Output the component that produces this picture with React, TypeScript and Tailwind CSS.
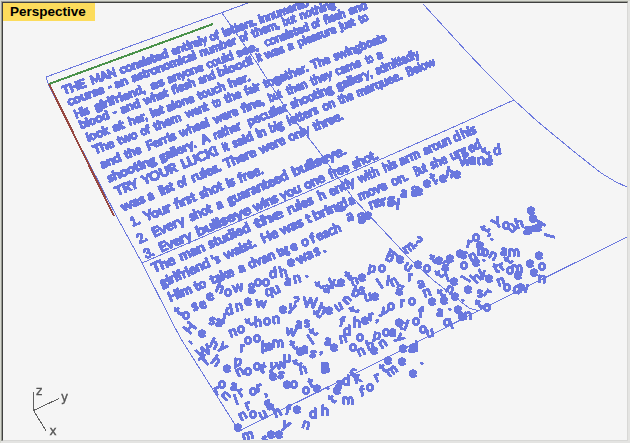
type Word = [string, number, number];
type Row = { from: [number, number]; to: [number, number]; size: number; words: Word[] };
type Glyph = [string, number, number, number];

const INK = "#6b78de";

// Each row runs along a baseline; its words are [text, left, right].
const rows: Row[] = [
  { from: [65, 94], to: [310, 5], size: 11.6, words: [["THE", 64, 88], ["MAN", 92, 118], ["consisted", 121, 170], ["entirely", 173, 209], ["of", 211, 221], ["letters.", 224, 258], ["Innumerab", 260, 310]] },
  { from: [70, 105], to: [337, 6], size: 11.6, words: [["course", 69, 106], ["-", 109, 113], ["an", 116, 130], ["astronomical", 133, 198], ["number", 201, 238], ["of", 241, 250], ["them,", 253, 281], ["but", 284, 298], ["nothing", 301, 337]] },
  { from: [76, 118], to: [367, 8], size: 11.6, words: [["His", 76, 91], ["girlfriend,", 96, 147], ["as", 152, 166], ["anyone", 169, 205], ["could", 208, 235], ["see,", 238, 260], ["consisted", 266, 311], ["of", 313, 322], ["flesh", 325, 347], ["and", 350, 369]] },
  { from: [80, 129], to: [368, 20], size: 11.6, words: [["blood", 81, 111], ["-", 114, 118], ["and", 122, 142], ["what", 145, 170], ["flesh", 173, 197], ["and", 200, 217], ["blood!", 219, 255], ["it", 258, 264], ["was", 266, 286], ["a", 289, 296], ["pleasure", 299, 338], ["just", 341, 357], ["to", 360, 370]] },
  { from: [86, 142], to: [250, 80], size: 11.8, words: [["look", 88, 111], ["at", 114, 126], ["her,", 130, 149], ["let", 152, 166], ["alone", 168, 196], ["touch", 199, 227], ["her.", 230, 252]] },
  { from: [97, 153], to: [387, 40], size: 12, words: [["The", 95, 116], ["two", 119, 139], ["of", 142, 152], ["them", 155, 183], ["went", 187, 210], ["to", 214, 223], ["the", 226, 243], ["fair", 246, 262], ["together.", 265, 310], ["The", 313, 332], ["swingboats", 335, 388]] },
  { from: [102, 168], to: [383, 57], size: 12, words: [["and", 102, 123], ["the", 126, 143], ["Ferris", 148, 178], ["wheel", 181, 211], ["were", 215, 240], ["fine,", 243, 266], ["but", 270, 284], ["then", 288, 309], ["they", 312, 334], ["came", 337, 363], ["to", 367, 375], ["a", 378, 385]] },
  { from: [109, 182], to: [417, 58], size: 12.3, words: [["shooting", 109, 158], ["gallery.", 161, 198], ["A", 203, 212], ["rather", 215, 243], ["peculiar", 249, 289], ["shooting", 292, 335], ["gallery,", 338, 374], ["admittedly", 377, 421]] },
  { from: [118, 195], to: [435, 65], size: 12.3, words: [["TRY", 117, 140], ["YOUR", 144, 179], ["LUCK!", 183, 220], ["It", 224, 231], ["said", 234, 255], ["in", 258, 268], ["big", 271, 285], ["letters", 289, 320], ["on", 324, 337], ["the", 340, 355], ["marquee.", 358, 404], ["Below", 408, 437]] },
  { from: [123, 211], to: [343, 119], size: 12.6, words: [["was", 123, 147], ["a", 149, 157], ["list", 161, 176], ["of", 179, 189], ["rules.", 193, 223], ["There", 226, 258], ["were", 261, 287], ["only", 290, 312], ["three.", 315, 345]] },
  { from: [133, 226], to: [263, 173], size: 13, words: [["1.", 132, 142], ["Your", 146, 173], ["first", 176, 198], ["shot", 201, 225], ["is", 228, 237], ["free.", 240, 265]] },
  { from: [140, 243], to: [347, 153], size: 13, words: [["2.", 139, 149], ["Every", 154, 187], ["shot", 191, 214], ["a", 218, 226], ["guaranteed", 229, 290], ["bullseye.", 294, 348]] },
  { from: [147, 258], to: [378, 158], size: 13, words: [["3.", 146, 156], ["Every", 161, 194], ["bullseye", 198, 253], ["wins", 255, 280], ["you", 282, 303], ["one", 306, 327], ["free", 331, 351], ["shot.", 354, 380]] },
  { from: [155, 272], to: [477, 132], size: 13, words: [["The", 154, 177], ["man", 181, 207], ["studied", 210, 252], ["the", 256, 285], ["rules", 289, 315], ["h", 320, 328], ["ently", 331, 357], ["with", 360, 381], ["his", 385, 399], ["arm", 401, 422], ["aroun", 425, 453], ["d", 455, 462], ["his", 463, 478]] },
  { from: [162, 287], to: [482, 147], size: 13, words: [["girlfriend", 162, 212], ["'s", 214, 222], ["waist.", 226, 258], ["He", 263, 280], ["was", 282, 305], ["t", 308, 312], ["bring!", 315, 350], ["a", 350, 357], ["move", 360, 389], ["on.", 393, 410], ["But", 416, 429], ["she", 432, 449], ["urg", 452, 469], ["ed", 470, 483]] },
  { from: [171, 301], to: [343, 230], size: 13, words: [["Him", 170, 194], ["to", 196, 208], ["take", 212, 236], ["a", 240, 248], ["dvan", 250, 277], ["tag", 279, 291], ["e", 292, 300], ["o", 303, 311], ["f", 312, 317], ["each", 318, 343]] },
];

// Letters that have come loose: [letter, centre x, centre y, rotation].
const loose: Glyph[] = [
  ["t", 178, 311, -40], ["o", 186, 315, 0], ["s", 195, 307, -20], ["e", 203, 305, -25], ["e", 210, 297, -20], ["h", 220, 288, 20], ["o", 228, 292, 0], ["w", 238, 288, -12], ["g", 252, 287, 5], ["o", 258, 282, 0], ["o", 266, 282, 0], ["d", 273, 273, -5], ["h", 283, 272, -12], ["e", 291, 262, 0], ["w", 302, 259, -30], ["a", 310, 255, -25], ["s", 317, 252, -20], [".", 325, 251, 0],
  ["a", 350, 217, -10], ["g", 361, 217, -15], ["e", 368, 215, 0], ["n", 373, 205, -20], ["e", 378, 203, -20], ["r", 384, 202, -15], ["g", 391, 200, 0], ["y", 397, 203, -20], ["a", 404, 193, 0], ["g", 415, 190, 5], ["e", 419, 191, 0], ["e", 427, 183, 0], ["t", 433, 178, -30], [".", 436, 183, 0], ["e", 443, 178, 0], ["h", 450, 173, 10], ["e", 457, 174, 0],
  ["w", 465, 162, -5], ["a", 473, 160, 0], ["n", 481, 161, -5], ["e", 489, 161, 0], ["t", 485, 151, -50], [",", 490, 153, 0], ["d", 497, 150, -10],
  ["H", 190, 328, -50], ["e", 202, 333, 0], ["s", 212, 321, 10], ["a", 219, 322, 0], ["i", 224, 319, 10], ["d", 229, 310, -15], ["n", 239, 307, -15], ["e", 248, 302, -10], ["w", 261, 304, 5], ["q", 269, 292, -15], ["u", 276, 290, -25], ["a", 288, 281, 0], ["n", 297, 279, -15], [".", 307, 276, 0],
  ["'", 194, 346, -45], ["W", 204, 352, -30], ["h", 214, 344, 25], ["y", 223, 347, 40], ["n", 233, 333, -20], ["o", 241, 329, 0], ["t", 249, 322, -50], ["h", 258, 322, -5], ["o", 267, 321, 0], ["n", 276, 320, -5], ["e", 283, 309, 0], ["y", 292, 308, 20], ["?", 296, 302, 10], ["W", 310, 303, 5], ["t", 319, 285, -50], ["a", 327, 289, 10], ["k", 333, 283, -20], ["e", 341, 282, 0], ["t", 348, 276, -30], ["h", 354, 280, -20], ["e", 362, 277, 0], ["p", 372, 269, 10], ["o", 382, 268, 0], ["b", 390, 257, 25], ["l", 394, 253, -50], ["e", 400, 259, 0], ["m", 409, 248, -35], ["?", 418, 242, 30],
  ["T", 205, 361, -40], ["h", 216, 361, 35], ["e", 227, 368, 0], ["r", 242, 348, 0], ["o", 248, 340, 0], ["o", 257, 338, 0], ["b", 265, 346, 0], ["l", 263, 348, 0], ["e", 269, 346, 0], ["m", 278, 343, 0], ["w", 291, 332, 10], ["a", 299, 324, 0], ["s", 307, 323, 0], ["t", 313, 332, -50], ["t", 317, 314, -40], ["h", 322, 309, 20], ["e", 329, 310, 0], ["u", 339, 307, -30], ["n", 347, 300, -50], ["t", 354, 310, -65], ["b", 356, 292, 20], ["s", 362, 290, 0], ["u", 368, 297, -10], ["e", 375, 296, 0], ["l", 380, 284, -35], ["i", 388, 281, 10], ["n", 394, 282, -30], ["g", 400, 289, 10], ["u", 408, 267, 35], ["r", 410, 277, 0], ["e", 418, 264, 0], ["o", 427, 268, 0],
  ["p", 238, 362, 5], ["n", 240, 372, -30], ["o", 248, 371, 0], ["o", 257, 366, 0], ["t", 263, 368, 15], ["y", 273, 367, 20], ["e", 273, 376, 0], ["w", 281, 365, -10], ["s", 281, 375, 20], ["u", 287, 358, 0], ["t", 297, 363, -60], ["n", 303, 370, -15], ["t", 293, 345, -30], ["e", 300, 351, 0], ["a", 305, 349, 0], ["s", 313, 354, 20], ["l", 311, 340, -35], [",", 321, 349, 0], ["a", 328, 341, 0], ["e", 334, 347, 0], ["n", 343, 339, -15], ["d", 347, 330, 0], ["f", 342, 322, 10], ["h", 357, 322, 0], ["e", 365, 320, 0], ["r", 371, 317, -5], [",", 377, 317, 0], ["y", 384, 312, 35], ["o", 391, 306, 0], ["r", 402, 303, 0], ["o", 412, 301, 0],
  ["B", 325, 368, -5], ["e", 325, 368, 0], ["o", 353, 347, 0], ["o", 360, 337, 0], ["n", 361, 352, -25], ["h", 370, 345, -20], ["e", 374, 350, 0], ["p", 377, 336, 10], ["o", 386, 332, 0], ["a", 393, 332, 0], ["y", 400, 338, 50], ["n", 383, 344, -35], ["e", 399, 322, 0], ["d", 404, 325, 20], ["o", 416, 321, 0], ["f", 421, 312, 0], ["o", 423, 329, 0], ["u", 430, 333, -10], ["e", 403, 348, 0], ["a", 412, 348, 0], ["d", 414, 346, 0],
  ["t", 433, 259, -30], ["e", 439, 260, 0], ["e", 450, 258, 0], ["g", 446, 265, 10], ["e", 460, 253, 0], ["s", 464, 255, 20], ["n", 473, 257, -30], ["e", 476, 262, 0], ["o", 464, 265, 0], ["r", 469, 244, 10], ["o", 476, 237, 0], ["e", 480, 245, 0], ["b", 481, 250, 0], ["o", 485, 252, 0], ["n", 493, 256, 30], [".", 484, 260, 0], ["t", 485, 229, -60], [",", 491, 232, 30], [".", 492, 239, 0], ["Y", 497, 223, -30], ["o", 506, 225, 0], ["u", 512, 228, -40], ["h", 519, 223, -20], ["a", 527, 230, 0], ["g", 533, 229, 70], ["e", 538, 227, 0], ["l", 541, 223, -60], ["e", 533, 218, 0], ["e", 531, 210, 0], ["l", 550, 236, -75],
  ["a", 504, 251, 0], ["m", 514, 252, 0], ["t", 508, 260, -50], ["e", 539, 255, 0], ["e", 530, 263, 0], ["o", 542, 266, 0], ["e", 534, 272, 0], ["n", 542, 279, 5], ["w", 523, 288, 0], ["d", 517, 289, 10], ["m", 517, 268, 0], ["o", 510, 270, 0], ["e", 518, 275, 0], ["t", 496, 268, -20], ["r", 502, 267, -35], ["n", 501, 282, -20], ["o", 507, 287, 0], ["e", 489, 278, 0], ["k", 483, 274, -20], ["h", 476, 278, -45], ["i", 466, 279, -60], ["e", 468, 289, 0], ["s", 480, 293, 0], ["r", 487, 293, 35], ["t", 439, 274, -50], ["i", 447, 277, -20], ["e", 454, 281, 0], ["a", 421, 284, -20], ["n", 427, 293, -20], ["e", 432, 301, 0], ["e", 444, 300, 0], ["t", 441, 293, -40], ["e", 455, 296, 0], ["n", 450, 290, 30], ["a", 440, 312, 0], [".", 450, 309, 0], [".", 463, 300, 0], ["o", 447, 322, 0], ["l", 451, 324, -20], ["e", 458, 309, 0], ["e", 462, 316, 0], ["n", 468, 315, 0], ["t", 479, 304, -35], ["o", 487, 307, 0],
  ["r", 217, 391, -20], ["o", 222, 384, 0], ["n", 226, 396, -45], ["a", 234, 386, 0], ["i", 236, 400, -20], ["r", 241, 393, -30], ["o", 253, 391, 0], ["r", 259, 388, -10], [",", 265, 392, -20], ["e", 287, 384, 0], ["o", 294, 384, 0], ["o", 306, 390, 0], ["t", 311, 383, -20], ["e", 317, 388, 0], [".", 328, 388, 0], ["t", 332, 399, -40], ["e", 337, 390, 0], ["a", 339, 384, 0], ["d", 346, 380, 0], ["c", 353, 372, 0], ["k", 357, 378, -20], ["m", 348, 400, 0], ["f", 362, 391, -10], ["o", 370, 387, 0], ["r", 377, 378, -25], ["t", 383, 368, -40], ["e", 388, 360, 0], ["m", 392, 371, -35], ["e", 402, 361, 0], [".", 422, 363, 0], ["e", 413, 373, 0],
  ["e", 238, 427, 0], ["n", 243, 416, -30], ["r", 248, 406, -20], ["o", 253, 414, 0], ["u", 263, 415, -25], ["g", 268, 404, -40], ["h", 277, 412, -25], ["f", 288, 410, 10], ["e", 297, 409, 0], ["d", 313, 413, 0], ["h", 325, 410, 0], ["y", 286, 425, 25], ["n", 306, 425, 20], ["m", 248, 436, -15], ["s", 265, 440, -10], ["e", 271, 434, 0], ["e", 279, 434, 0],
];

const wires = [
  "46,77 248,3",
  "46,77 49,86 118,219 142,263 171,320 181,339 239,431",
  "239,431 380,361 484,308 627,237",
  "142,263 307,192 440,133 514,100",
  "222,13 257,63 288,112 318,150 353,198 410,259 433,280 469,308 479,311",
  "423,4 467,52 487,73 514,100 537,121 572,150 601,173 616,182 627,187",
];

function TextRow({ row }: { row: Row }) {
  const [x1, y1] = row.from;
  const [x2, y2] = row.to;
  const slope = (y2 - y1) / (x2 - x1);
  const angle = (Math.atan(slope) * 180) / Math.PI;
  const stretch = Math.sqrt(1 + slope * slope);
  return (
    <>
      {row.words.map(([text, a, b]) => (
        <text
          key={a}
          fontSize={row.size}
          textLength={text.length > 1 ? (b - a - 1) * stretch : undefined}
          lengthAdjust="spacingAndGlyphs"
          transform={`translate(${a} ${y1 + (a - x1) * slope + 0.4}) rotate(${angle})`}
        >
          {text}
        </text>
      ))}
    </>
  );
}

function Scene() {
  return (
    <svg className="block h-full w-full" viewBox="3 3 624 437">
      <defs>
        <filter id="hard" x="0" y="0" width="630" height="443" filterUnits="userSpaceOnUse">
          <feComponentTransfer>
            <feFuncA type="discrete" tableValues="0 1" />
          </feComponentTransfer>
        </filter>
      </defs>
      <g fill="none" stroke={INK} shapeRendering="crispEdges">
        {wires.map((points) => (
          <polyline key={points} points={points} />
        ))}
      </g>
      <g fill="none" strokeWidth="2" shapeRendering="crispEdges">
        <path d="M49 84L213 24" stroke="#4a924b" />
        <path d="M49 84L114 216" stroke="#964842" />
      </g>
      <g
        className="font-[Lato,'Liberation_Sans',sans-serif]"
        fill={INK}
        stroke={INK}
        strokeLinejoin="round"
        filter="url(#hard)"
      >
        <g strokeWidth="1.75">
          {rows.map((row) => (
            <TextRow key={row.from[1]} row={row} />
          ))}
        </g>
        <g strokeWidth="1.75">
          {loose.map(([letter, x, y, turn], i) => (
            <text
              key={i}
              fontSize="14"
              textAnchor="middle"
              transform={`translate(${x} ${y}) rotate(${turn})`}
              y={/[bdfhkltiWTHYB?]/.test(letter) ? 4.6 : /[.]/.test(letter) ? 0.5 : 3.5}
            >
              {letter}
            </text>
          ))}
        </g>
      </g>
      <path d="M33.5 392V410.5L59 398.5M33.5 410.5L46.5 431.5" fill="none" stroke="#606060" shapeRendering="crispEdges" />
      <g className="font-['DejaVu_Sans',sans-serif]" fontSize="12" fill="#555" stroke="#555" strokeWidth=".4">
        <text x="36" y="395">z</text>
        <text x="61" y="401">y</text>
        <text x="49.500" y="435">x</text>
      </g>
    </svg>
  );
}

export default function App() {
  return (
    <div className="h-[443px] w-[630px] overflow-hidden border-t border-l border-[#d6d8d0] bg-[#e4e4e2] pr-[2px] pb-[2px]">
      <div className="h-full w-full border-t border-l border-[#9a9c94]">
        <div className="h-full w-full border-t border-r border-b border-l border-t-[#404040] border-r-[#d8d8d6] border-b-[#d8d8d6] border-l-[#404040] bg-[#f5f5f5]">
          <div className="relative h-full w-full">
            <Scene />
            <div className="absolute top-0 left-0 flex h-[18px] w-[92px] items-center bg-[#fcdc5c] pb-px pl-[7px] font-['Liberation_Sans',Arial,sans-serif] text-[13.5px] leading-none font-bold text-black">
              Perspective
            </div>
          </div>
        </div>
      </div>
    </div>
  );
}
